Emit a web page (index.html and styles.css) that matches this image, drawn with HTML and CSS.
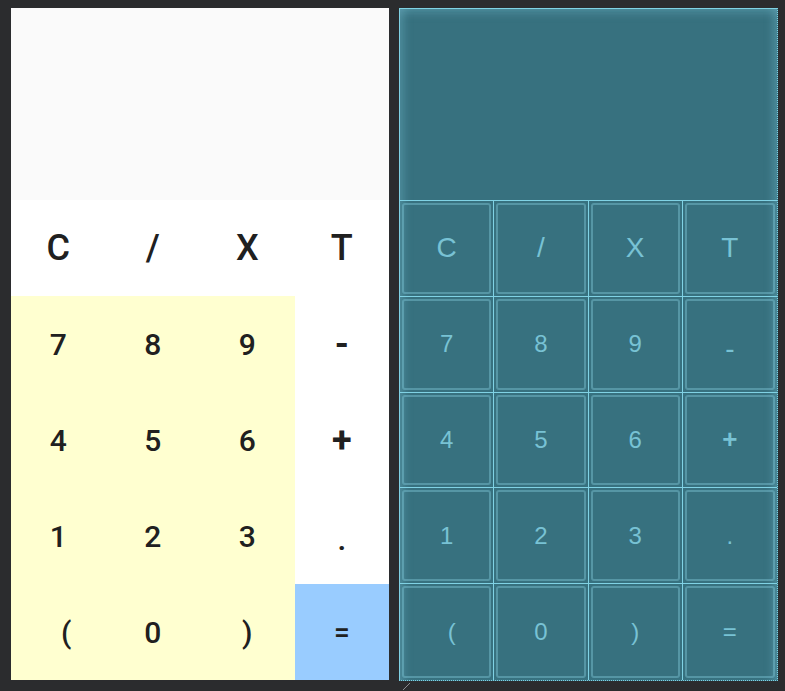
FILE: index.html
```html
<!DOCTYPE html>
<html>
<head>
<meta charset="utf-8">
<link rel="stylesheet" href="styles.css">
</head>
<body>
<div class="stage">
  <div class="design">
    <div class="screen"></div>
    <div class="keys">
      <div class="key big">C</div>
      <div class="key big">/</div>
      <div class="key big">X</div>
      <div class="key big">T</div>
      <div class="key num">7</div>
      <div class="key num">8</div>
      <div class="key num">9</div>
      <div class="key op">-</div>
      <div class="key num">4</div>
      <div class="key num">5</div>
      <div class="key num">6</div>
      <div class="key op">+</div>
      <div class="key num">1</div>
      <div class="key num">2</div>
      <div class="key num">3</div>
      <div class="key op dot">.</div>
      <div class="key num paren">(</div>
      <div class="key num">0</div>
      <div class="key num">)</div>
      <div class="key eq">=</div>
    </div>
  </div>
  <div class="blueprint">
    <div class="bp-screen"></div>
    <div class="bp-keys">
      <div class="bp-key bp-big"><span>C</span></div>
      <div class="bp-key bp-big"><span>/</span></div>
      <div class="bp-key bp-big"><span>X</span></div>
      <div class="bp-key bp-big"><span>T</span></div>
      <div class="bp-key"><span>7</span></div>
      <div class="bp-key"><span>8</span></div>
      <div class="bp-key"><span>9</span></div>
      <div class="bp-key bp-minus"><span>-</span></div>
      <div class="bp-key"><span>4</span></div>
      <div class="bp-key"><span>5</span></div>
      <div class="bp-key"><span>6</span></div>
      <div class="bp-key bp-op"><span>+</span></div>
      <div class="bp-key"><span>1</span></div>
      <div class="bp-key"><span>2</span></div>
      <div class="bp-key"><span>3</span></div>
      <div class="bp-key"><span>.</span></div>
      <div class="bp-key bp-paren"><span>(</span></div>
      <div class="bp-key"><span>0</span></div>
      <div class="bp-key"><span>)</span></div>
      <div class="bp-key"><span>=</span></div>
    </div>
    <svg class="resize" width="10" height="10" viewBox="0 0 10 10"><line x1="1" y1="9" x2="8" y2="2" stroke="#8a8c90" stroke-width="1"/></svg>
  </div>
</div>
</body>
</html>
```
FILE: styles.css
```css
html, body {
  margin: 0;
  padding: 0;
  background: #2b2c2e;
  width: 785px;
  height: 691px;
  overflow: hidden;
}

.stage {
  display: flex;
  gap: 10px;
  padding: 8px 0 0 11px;
}

.design {
  width: 378px;
  height: 672px;
  display: flex;
  flex-direction: column;
  background: #ffffff;
}

.screen {
  height: 192px;
  background: #fafafa;
}

.keys {
  display: grid;
  grid-template-columns: repeat(4, 1fr);
  grid-template-rows: repeat(5, 96px);
  font-family: Roboto, "Liberation Sans", sans-serif;
  color: #202020;
}

.key {
  display: flex;
  align-items: center;
  justify-content: center;
  background: #ffffff;
}

.key.big {
  font-size: 36px;
  font-weight: 500;
}

.key.num {
  font-size: 30px;
  font-weight: 500;
  background: #ffffd0;
}

.key.paren {
  padding-left: 16px;
}

.key.op {
  font-size: 36px;
  font-weight: 700;
}

.key.dot {
  font-size: 28px;
  padding-top: 8px;
}

.key.eq {
  font-size: 28px;
  font-weight: 500;
  background: #99ccff;
}

.blueprint {
  position: relative;
  width: 377px;
  height: 671px;
  background: #37717f;
  border: 1px solid #80d2e4;
  border-right-style: dotted;
  border-bottom-style: dotted;
  display: flex;
  flex-direction: column;
  box-shadow: inset 10px 0 8px -6px rgba(120, 190, 210, 0.35),
              inset -10px 0 8px -6px rgba(120, 190, 210, 0.35),
              inset 0 10px 8px -6px rgba(120, 190, 210, 0.35);
}

.bp-screen {
  height: 191px;
  border-bottom: 1px solid #80d2e4;
}

.bp-keys {
  flex: 1;
  display: grid;
  grid-template-columns: repeat(4, 1fr);
  grid-template-rows: repeat(5, 1fr);
  font-family: "Liberation Sans", Arial, sans-serif;
  color: #78c2d4;
}

.bp-key {
  border-right: 1px solid #80d2e4;
  border-bottom: 1px solid #80d2e4;
  padding: 2px;
  display: flex;
}

.bp-key:nth-child(4n) {
  border-right: none;
}

.bp-key:nth-last-child(-n+4) {
  border-bottom: none;
}

.bp-key span {
  flex: 1;
  display: flex;
  align-items: center;
  justify-content: center;
  border: 2px solid rgba(125, 195, 212, 0.45);
  border-radius: 3px;
  font-size: 24px;
}

.bp-key.bp-big span {
  font-size: 28px;
}

.bp-key.bp-op span {
  font-size: 26px;
  font-weight: 700;
}

.bp-key.bp-minus span {
  font-size: 28px;
  padding-top: 10px;
}

.bp-key.bp-paren span {
  padding-left: 10px;
}

.resize {
  position: absolute;
  left: 2px;
  bottom: -11px;
}
```
